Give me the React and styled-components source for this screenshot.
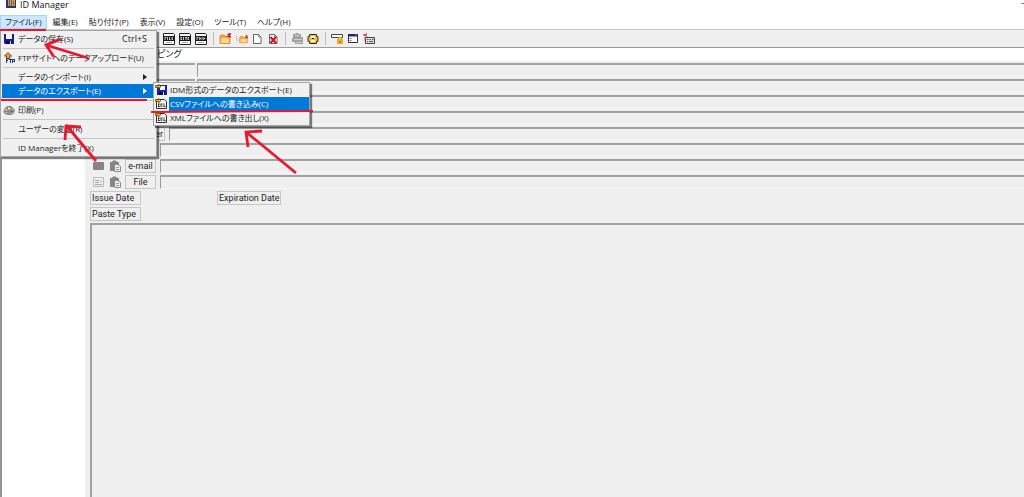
import React, { useCallback, useState } from 'react';
import styled, { createGlobalStyle, css } from 'styled-components';

const GlobalStyle = createGlobalStyle`
  * {
    box-sizing: border-box;
  }

  body {
    margin: 0;
    background: #efefef;
    color: #222;
    font-family: 'Open Sans', 'Noto Sans CJK JP', sans-serif;
    font-size: 9px;
    font-feature-settings: 'palt';
    line-height: 14px;
    overflow: hidden;
  }

  button,
  input,
  textarea {
    margin: 0;
    padding: 0;
    border: none;
    border-radius: 0;
    outline: none;
    background: none;
    color: inherit;
    font: inherit;
    font-feature-settings: inherit;
  }

  ul {
    margin: 0;
    padding: 0;
    list-style: none;
  }
`;

const Window = styled.div`
  position: relative;
  display: flex;
  flex-direction: column;
  min-height: 100vh;
`;

const TitleBar = styled.header`
  display: flex;
  align-items: flex-start;
  justify-content: space-between;
  height: 15px;
  padding-left: 6px;
  background: #fff;
`;

const Title = styled.h1`
  display: flex;
  gap: 3px;
  margin: 0;
  color: #111;
  font-size: 9px;
  font-weight: 400;
  line-height: 10px;
`;

const Minimize = styled.button`
  width: 3px;
  height: 4px;
  border-bottom: 1px solid #888;
`;

const MenuBar = styled.ul`
  display: flex;
  gap: 1px;
  height: 15px;
  background: #fff;
  border-bottom: 1px solid #cbcbcb;
`;

const MenuEntry = styled.li`
  position: relative;
`;

const MenuTitle = styled.button`
  display: block;
  height: 14px;
  padding: 0 5px;
  color: #222;
  font-size: 8px;
  line-height: 14px;
  white-space: nowrap;

  ${(props) =>
    props.$open &&
    css`
      background: #cce8ff;
      box-shadow: inset 0 0 0 1px #a6d5fa;
    `}
`;

const Popup = styled.ul`
  position: absolute;
  top: ${(props) => (props.$sub ? '-2px' : '15px')};
  left: ${(props) => (props.$sub ? '151px' : '0')};
  z-index: 2;
  width: 157px;
  padding: ${(props) => (props.$sub ? '0' : '1px')};
  background: #f0f0f0;
  border: 1px solid #a5a5a5;
  box-shadow: 2px 2px 1px rgba(0, 0, 0, 0.5);
`;

const PopupEntry = styled.li`
  position: relative;
`;

const PopupItem = styled.button`
  display: grid;
  grid-template-columns: 16px 1fr auto;
  align-items: center;
  width: 100%;
  height: 14px;
  padding-right: 8px;
  font-size: 8px;
  line-height: 14px;
  text-align: left;
  white-space: nowrap;

  ${(props) =>
    props.$active &&
    css`
      color: #fff;
      background: ${props.$sub
        ? 'linear-gradient(to right, #f0f0f0 15px, #0078d7 15px)'
        : '#0078d7'};
    `}
`;

const ItemIcon = styled.span`
  display: flex;
  padding-left: 1px;
`;

const Hint = styled.span`
  display: flex;
  font-size: 9px;
`;

const Separator = styled.li`
  height: 5px;
  padding: 2px 1px;

  &::before {
    content: '';
    display: block;
    height: 1px;
    background: #c4c4c4;
  }
`;

const Toolbar = styled.div`
  display: flex;
  align-items: center;
  height: 18px;
  padding-left: 161px;
  border-bottom: 1px solid #999;
`;

const ToolButton = styled.button`
  display: flex;
  align-items: center;
  justify-content: center;
  width: 16px;
  height: 16px;
`;

const ToolDivider = styled.span`
  width: 8px;
  height: 13px;
  background: linear-gradient(to right, transparent 4px, #bbb 4px, #bbb 5px, transparent 5px);
`;

const Body = styled.main`
  display: flex;
  flex: 1;
`;

const Sidebar = styled.nav`
  flex: none;
  width: 85px;
  background: #fff;
  border-left: 2px solid #959595;
`;

const Detail = styled.section`
  display: flex;
  flex: 1;
  flex-direction: column;
  gap: 2px;
  min-width: 0;
`;

const Heading = styled.div`
  height: 13px;
  padding-left: 72px;
  background: #fff;
  line-height: 11px;
`;

const Row = styled.div`
  display: flex;
  align-items: center;
  height: 14px;
  padding-left: 5px;
  gap: ${(props) => props.$gap || 4}px;
`;

const LabelButton = styled.button`
  flex: none;
  width: ${(props) => props.$width}px;
  height: 14px;
  padding: 0 1px;
  border: 1px solid #c6c6c6;
  font-family: Roboto, sans-serif;
  line-height: 12px;
  text-align: ${(props) => props.$align || 'center'};
  white-space: nowrap;
`;

const RowIcons = styled.div`
  display: flex;
  flex: none;
  align-items: center;
  justify-content: space-between;
  width: 31px;
  padding-left: 3px;
`;

const Field = styled.input`
  flex: ${(props) => (props.$width ? 'none' : '1')};
  width: ${(props) => (props.$width ? `${props.$width}px` : 'auto')};
  min-width: 0;
  height: 14px;
  border-top: 2px solid #a2a2a2;
  border-left: 1px solid #999;
  border-bottom: 1px solid #f8f8f8;
`;

const Memo = styled.textarea`
  flex: 1;
  margin-left: 5px;
  border-top: 2px solid #a2a2a2;
  border-left: 2px solid #a2a2a2;
  resize: none;
`;

const Annotations = styled.svg`
  position: absolute;
  top: 0;
  left: 0;
  z-index: 3;
  fill: none;
  stroke: #e8192f;
  pointer-events: none;
`;

function AppIcon() {
  return (
    <svg width="11" height="9" viewBox="0 0 11 9">
      <path fill="#29376f" d="M0 0h10v8H0z" />
      <path fill="#c99c55" d="M2 0h7v6H2z" />
      <path stroke="#5d4a4a" strokeWidth=".7" d="M3.500 0v6M5.500 0v6M7.500 1v4" />
    </svg>
  );
}

function FloppyIcon() {
  return (
    <svg width="12" height="12" viewBox="0 0 12 12">
      <path fill="#161d96" d="M1 1h10v10H2l-1-1z" />
      <path fill="#f4f4fa" d="M3 1h6v5H3z" />
      <path fill="#0b0e4d" d="M3 8h6v3H3z" />
      <path fill="#dcdcec" d="M7 8h1v3H7z" />
    </svg>
  );
}

function FtpIcon() {
  return (
    <svg width="13" height="12" viewBox="0 0 13 12">
      <path fill="#f59a23" stroke="#5d3a12" strokeWidth=".8" d="M5 .6l3.600 3.400H6.800v3H3.400V4H1.400z" />
      <path fill="#1e3f78" d="M3 6h1v5H3zM3 6h3v1H3zM3 8h2v1H3zM6 7h3v1H6zM7 7h1v4H7zM9 7h1v4H9zM10 7h2v1h-2zM11 8h1v1h-1zM10 9h2v1h-2z" />
    </svg>
  );
}

function PrintIcon() {
  return (
    <svg width="12" height="11" viewBox="0 0 12 11" fill="none" stroke="#777">
      <path fill="#bbb" d="M1 5.500L3.500 2 8 1.500l3 3v3L8.500 9.500 3 9 1 7.500z" />
      <path fill="#eee" d="M4 2.500l3-1L8.500 4 5 5.500z" />
      <path d="M2 6.500l6 .5 3-2M4 8.500l3-.5" />
      <circle cx="8.500" cy="6.500" r="1" fill="#666" />
    </svg>
  );
}

function ExportFloppyIcon() {
  return (
    <svg width="13" height="12" viewBox="0 0 13 12">
      <path fill="#1a229f" d="M2 1h10v10H2z" />
      <path fill="#f3f3fa" d="M5 2h5v4H5z" />
      <path fill="#090b46" d="M4 8h6v3H4z" />
      <path fill="#dadaed" d="M8 8h1v3H8z" />
      <path fill="#f2b11c" stroke="#4d3a08" strokeWidth=".7" d="M.5 1.500h3V.5l2.500 2-2.500 2.300V3.500h-3z" />
    </svg>
  );
}

function ExportSheetIcon() {
  return (
    <svg width="13" height="12" viewBox="0 0 13 12">
      <path fill="#eee" stroke="#333" d="M1.500 1.500h8l2 2v7h-10z" />
      <path stroke="#222" strokeWidth=".8" d="M3 6h2M3.500 6v3M3 8.500h2M6 6v3M5.500 6h2M7 7.500v1M9 5.500v3M8.500 8.500h2" />
      <path fill="#f2b11c" stroke="#4d3a08" strokeWidth=".7" d="M.5 1.500h3V.5l2.500 2L3.500 4.800V3.500h-3z" />
    </svg>
  );
}

function BandIcon({ kind }) {
  // pale marks on the dark band differ for each field type
  const marks = {
    file: 'M2 4v3M2 4.500h1.500M4.500 4v3M6.500 4v3M6.500 6.500h1M9 4v3M9 4.500h1M9 6.500h1',
    date: 'M2 4v3M2 4.500h1.200M2 6.500h1.200M4.500 4v3M6 4.500h2M7 4v3M9 4v3M9 4.500h1M9 6.500h1',
    pack: 'M2 4v3M2 4.500h1.500M4.700 4v3M4.700 5.500H6M7 4v3M8.800 4v3M8.800 5.500h1.400',
  };
  return (
    <svg width="12" height="12" viewBox="0 0 12 12">
      <path fill="#fff" stroke="#222" d="M.5.5h10l1 1v10H.5z" />
      <path fill="#1a1a1a" d="M1 3h10v5H1z" />
      <path stroke="#eee" strokeWidth=".8" d={marks[kind]} />
      <path stroke="#aaa" d="M3 9.500h6" />
    </svg>
  );
}

function FolderIcon({ small }) {
  return (
    <svg width="13" height="12" viewBox="0 0 13 12">
      {small && <path fill="none" stroke="#999" strokeDasharray="1 1" d="M1.500 3v4h4" />}
      <g transform={small ? 'translate(4 2) scale(.75)' : undefined}>
        <path fill="#f4a536" stroke="#c5832a" strokeWidth=".7" d="M1 3l1-1h3l1 1h5v7.500H1z" />
        <path fill="#ffd58a" d="M2 5h8v5H2z" />
        <path stroke="#c9192b" strokeWidth="1.100" d="M8.500 1l3.500 3M12 .5L8.500 4M10.200 0v4.500" />
      </g>
    </svg>
  );
}

function PageIcon({ remove }) {
  return (
    <svg width="12" height="12" viewBox="0 0 12 12">
      <path fill="#fff" stroke="#555" strokeWidth=".9" d="M2.500 1.500h5l2.500 2.500v6.500H2.500z" />
      <path fill="none" stroke="#777" strokeWidth=".8" d="M7.500 1.500V4H10" />
      {remove && <path stroke="#d5101d" strokeWidth="2" d="M3.500 4l5.500 6M9 4l-5.500 6" />}
    </svg>
  );
}

function PasteIcon() {
  return (
    <svg width="13" height="13" viewBox="0 0 13 13">
      <path fill="#a3a3a3" d="M2 2h2l1-1h2l1 1h2v3h2v7H4v-2H1V6h1z" />
      <path stroke="#dcdcdc" strokeWidth=".8" d="M4 3.500h4M3 7.500h8M5 10.500h6" />
    </svg>
  );
}

function LinkIcon() {
  return (
    <svg width="12" height="12" viewBox="0 0 12 12">
      <path fill="#f2b938" stroke="#4b3508" d="M2.500 1.500h7v2h1.500v5H9.500v2h-7v-2H1v-5h1.500z" />
      <path fill="#fff" d="M4 3h4v2H4zM4 7h4v2H4z" />
      <path stroke="#222" d="M4 1.500h4M5 5.500h2M4 10.500h4" />
    </svg>
  );
}

function LockPanelIcon() {
  return (
    <svg width="13" height="12" viewBox="0 0 13 12">
      <path fill="#fff" stroke="#444" d="M.5 1.500h11v3H.5z" />
      <path fill="#f3ae19" d="M6 6h6v5H6z" />
      <path fill="none" stroke="#c98c0c" d="M7.500 6V4.500h3V6" />
      <path fill="#49350a" d="M8.500 8h1v1.500h-1z" />
    </svg>
  );
}

function WindowIcon() {
  return (
    <svg width="12" height="12" viewBox="0 0 12 12">
      <path fill="#fff" stroke="#333" d="M1.500 1.500h9v8h-9z" />
      <path fill="#1d267e" d="M1 1h10v2.500H1z" />
      <path fill="#da4650" d="M8 1.500h2v1H8z" />
      <path stroke="#777" d="M2.500 5.500h2M2.500 7.500h2" />
    </svg>
  );
}

function KeyboardIcon() {
  return (
    <svg width="13" height="12" viewBox="0 0 13 12">
      <path fill="#ddd" stroke="#444" d="M2.500 4.500h9v6h-9z" />
      <path stroke="#333" strokeWidth=".8" d="M4 6.500h1.500M6.500 6.500H8M9 6.500h1.500M4 8.500h1M6 8.500h4" />
      <path stroke="#c3344a" strokeWidth=".9" d="M0 2h4M1 1l3 3M4 0L1 3M2 4v4" />
    </svg>
  );
}

function MailIcon() {
  return (
    <svg width="12" height="10" viewBox="0 0 12 10">
      <rect y="1" width="11" height="8" rx="1" fill="#858585" />
    </svg>
  );
}

function CardIcon() {
  return (
    <svg width="12" height="10" viewBox="0 0 12 10">
      <path fill="#eee" stroke="#bbb" d="M.5.5h10v9H.5z" />
      <path stroke="#aaa" d="M2 3.500h4M2 5.500h4M2 7.500h7M7 4.500h2" />
    </svg>
  );
}

function ClipboardIcon() {
  return (
    <svg width="12" height="12" viewBox="0 0 12 12">
      <path fill="#858585" d="M1 2h2l1-1.500h3L8 2h2v9H1z" />
      <path fill="#ededed" stroke="#8c8c8c" d="M5.500 4.500H9L11.500 6.500v5h-6z" />
      <path stroke="#999" d="M7 7.500h3M7 9.500h3" />
    </svg>
  );
}

function SubmenuArrow() {
  return (
    <svg width="4" height="6" viewBox="0 0 4 6">
      <path fill="currentColor" d="M0 0l4 3-4 3z" />
    </svg>
  );
}

const MENUS = ['編集(E)', '貼り付け(P)', '表示(V)', '設定(O)', 'ツール(T)', 'ヘルプ(H)'];

const FILE_MENU = [
  { label: 'データの保存(S)', icon: <FloppyIcon />, hint: 'Ctrl+S' },
  null,
  { label: 'FTPサイトへのデータアップロード(U)', icon: <FtpIcon /> },
  null,
  { label: 'データのインポート(I)', hint: <SubmenuArrow /> },
  {
    label: 'データのエクスポート(E)',
    hint: <SubmenuArrow />,
    items: [
      { label: 'IDM形式のデータのエクスポート(E)', icon: <ExportFloppyIcon /> },
      { label: 'CSVファイルへの書き込み(C)', icon: <ExportSheetIcon /> },
      { label: 'XMLファイルへの書き出し(X)', icon: <ExportSheetIcon /> },
    ],
  },
  null,
  { label: '印刷(P)', icon: <PrintIcon /> },
  null,
  { label: 'ユーザーの変更(R)' },
  null,
  { label: 'ID Managerを終了(X)' },
];

const TOOLS = [
  ['File', <BandIcon kind="file" />],
  ['Date', <BandIcon kind="date" />],
  ['Pack', <BandIcon kind="pack" />],
  null,
  ['New folder', <FolderIcon />],
  ['New subfolder', <FolderIcon small />],
  ['New item', <PageIcon />],
  ['Delete item', <PageIcon remove />],
  null,
  ['Paste', <PasteIcon />],
  ['Link', <LinkIcon />],
  null,
  ['Password', <LockPanelIcon />],
  ['Window', <WindowIcon />],
  ['Keyboard', <KeyboardIcon />],
];

function ExportMenu({ items }) {
  const [active, setActive] = useState(1);

  return (
    <Popup $sub>
      {items.map((item, i) => (
        <PopupEntry key={item.label}>
          <PopupItem $sub $active={i === active} onMouseEnter={() => setActive(i)}>
            <ItemIcon>{item.icon}</ItemIcon>
            <span>{item.label}</span>
          </PopupItem>
        </PopupEntry>
      ))}
    </Popup>
  );
}

function FileMenu() {
  return (
    <Popup>
      {FILE_MENU.map((item, i) =>
        item ? (
          <PopupEntry key={item.label}>
            <PopupItem $active={Boolean(item.items)}>
              <ItemIcon>{item.icon}</ItemIcon>
              <span>{item.label}</span>
              <Hint>{item.hint}</Hint>
            </PopupItem>
            {item.items && <ExportMenu items={item.items} />}
          </PopupEntry>
        ) : (
          <Separator key={i} />
        ),
      )}
    </Popup>
  );
}

export default function App() {
  const [open, setOpen] = useState(true);
  const toggle = useCallback(() => setOpen((prev) => !prev), []);

  return (
    <Window>
      <GlobalStyle />
      <TitleBar>
        <Title>
          <AppIcon />
          ID Manager
        </Title>
        <Minimize aria-label="Minimize" />
      </TitleBar>
      <MenuBar>
        <MenuEntry>
          <MenuTitle $open={open} onClick={toggle}>
            ファイル(F)
          </MenuTitle>
          {open && <FileMenu />}
        </MenuEntry>
        {MENUS.map((name) => (
          <MenuEntry key={name}>
            <MenuTitle>{name}</MenuTitle>
          </MenuEntry>
        ))}
      </MenuBar>
      <Toolbar>
        {TOOLS.map((tool, i) =>
          tool ? (
            <ToolButton key={tool[0]} aria-label={tool[0]}>
              {tool[1]}
            </ToolButton>
          ) : (
            <ToolDivider key={i} />
          ),
        )}
      </Toolbar>
      <Body>
        <Sidebar />
        <Detail>
          <Heading>ピング</Heading>
          <Row $gap={2}>
            <Field $width={105} aria-label="Title" />
            <Field aria-label="Title value" />
          </Row>
          <Row $gap={2}>
            <Field $width={105} aria-label="Login" />
            <Field aria-label="Login value" />
          </Row>
          <Row>
            <Field aria-label="Item 1" />
          </Row>
          <Row>
            <Field aria-label="Item 2" />
          </Row>
          <Row>
            <LabelButton $width={75} $align="right" id="user">
              User
            </LabelButton>
            <Field aria-labelledby="user" />
          </Row>
          <Row>
            <LabelButton $width={66} aria-label="URL" />
            <Field aria-label="URL value" />
          </Row>
          <Row>
            <RowIcons>
              <MailIcon />
              <ClipboardIcon />
            </RowIcons>
            <LabelButton $width={31} id="email">
              e-mail
            </LabelButton>
            <Field aria-labelledby="email" />
          </Row>
          <Row>
            <RowIcons>
              <CardIcon />
              <ClipboardIcon />
            </RowIcons>
            <LabelButton $width={31} id="file">
              File
            </LabelButton>
            <Field aria-labelledby="file" />
          </Row>
          <Row $gap={76}>
            <LabelButton $width={51} $align="left">
              Issue Date
            </LabelButton>
            <LabelButton $width={64} $align="left">
              Expiration Date
            </LabelButton>
          </Row>
          <Row>
            <LabelButton $width={51} $align="left">
              Paste Type
            </LabelButton>
          </Row>
          <Memo aria-label="Memo" />
        </Detail>
      </Body>
      <Annotations width="320" height="180" viewBox="0 0 320 180">
        <path strokeWidth="2" d="M0 30h46M1 100h146M151 112l162-1" />
        <path
          strokeWidth="2.800"
          d="M88 58L46 45M61 39L46 45l8 12M96 161L66 125M81 127l-15-1-1 14M296 173l-50-41M262 131l-16 1 2 15"
        />
      </Annotations>
    </Window>
  );
}
